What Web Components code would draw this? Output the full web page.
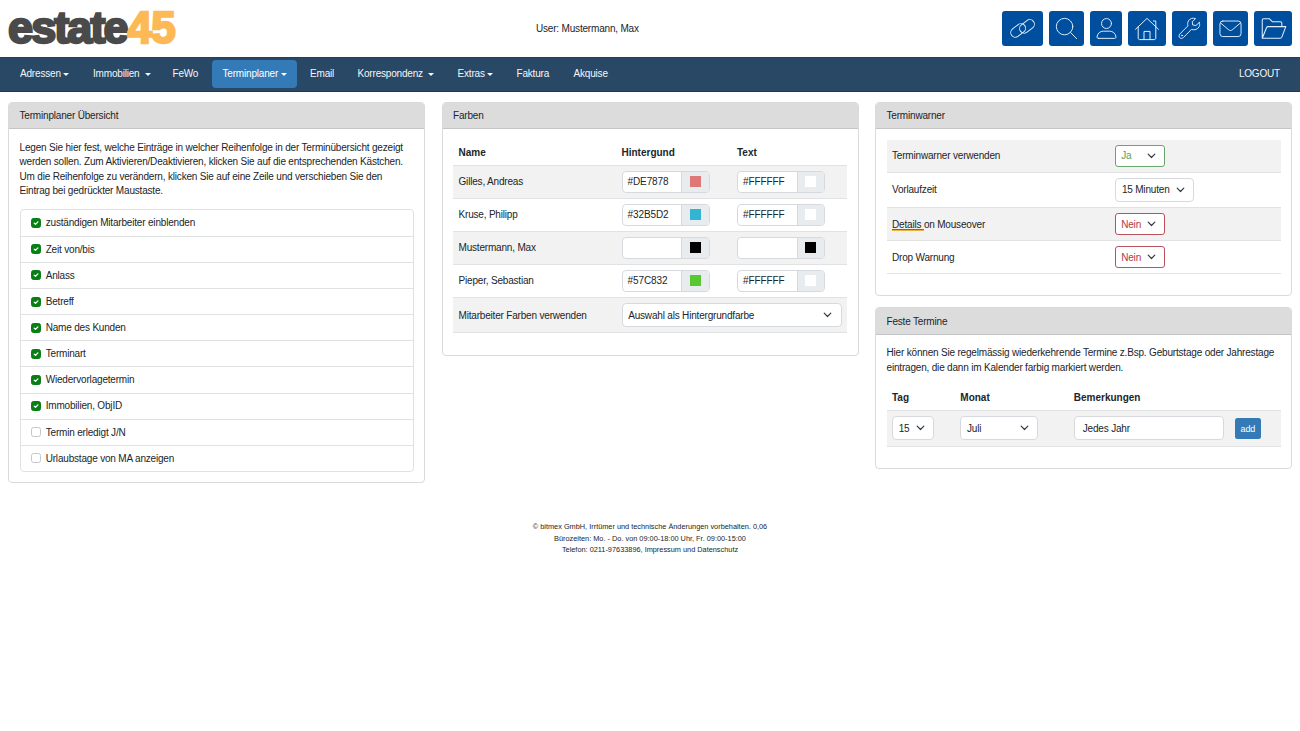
<!DOCTYPE html>
<html lang="de">
<head>
<meta charset="utf-8">
<title>estate45 - Terminplaner</title>
<style>
  body {
    margin: 0; background: #fff; color: #212529;
    font-family: 'Liberation Sans', Arial, sans-serif;
    font-size: 10px; line-height: 14.35px; letter-spacing: -.185px;
  }
</style>
</head>
<body>
<estate-app></estate-app>

<script>
(function () {
  const define = (name, css, render) => {
    customElements.define(name, class extends HTMLElement {
      connectedCallback() {
        const shadow = this.attachShadow({ mode: 'open' });
        shadow.innerHTML = `<style>:host { display: block; box-sizing: border-box; } * { box-sizing: border-box; } ${css}</style>${render(this)}`;
      }
    });
  };

  // Line icons for the quick links, 24x24 grid
  const ICONS = {
    link: '<rect x="-1" y="9.200" width="17" height="9.600" rx="4.800" transform="rotate(-38 7.500 14)"/><rect x="8.200" y="5" width="17" height="9.600" rx="4.800" transform="rotate(-38 16.700 9.800)"/>',
    search: '<circle cx="10" cy="10" r="8.600"/><path d="M16.200 16.200 22.600 22.600"/>',
    user: '<circle cx="12" cy="6.800" r="5.200"/><path d="M3.700 22.300h16.600c1.100 0 1.700-.6 1.600-1.500-.5-4-3.500-6-6.600-6H8.700c-3.100 0-6.100 2-6.600 6-.1.900.5 1.500 1.600 1.500z"/>',
    home: '<path d="M.5 12.300 12 1.400l11.500 10.900M3.200 10v11c0 1 .5 1.600 1.500 1.600h14.600c1 0 1.500-.6 1.500-1.600V10M9 22.400v-8h6v8M18.300 4h2.500v5.400"/>',
    wrench: '<path d="M22.200 5.800 18.700 8.900 15.300 8.300 14.900 5 18.300 1.700C15.400.6 12.300 1.500 10.800 4.200c-1 1.800-.8 3.500-.4 5L2 17.700c-1.200 1.200-1.200 2.900-.2 3.900s2.700 1 3.900-.2l8.300-8.400c3.300 1 6.500-.1 8-2.800.8-1.500.8-3 .2-4.400z"/><circle cx="4.200" cy="19.300" r=".5"/>',
    mail: '<rect x="1" y="4.200" width="22" height="16.200" rx="3"/><path d="m1.600 6.200 8.700 7.300c1 .8 2.400.8 3.400 0l8.700-7.300"/>',
    folder: '<path d="M1.200 21.300V4c0-.8.5-1.300 1.300-1.300h5.700l2.600 2.800h7.900c.8 0 1.300.5 1.300 1.300v3.400M1.200 21.300 5.400 11c.2-.5.600-.8 1.200-.8h17.200L20 20.300c-.3.700-.8 1-1.500 1z"/>'
  };

  define('estate-icon-button', `
    :host { height: 35px; border-radius: 3px; background: #004f9f; display: flex; align-items: center; justify-content: center; }
    svg { display: block; overflow: visible; fill: none; stroke: #e4eefa; stroke-width: 1; stroke-linejoin: round; stroke-linecap: round; }
  `, el => {
    const size = el.getAttribute('size') || 22;
    return `<svg width="${size}" height="${size}" viewBox="0 0 24 24">${ICONS[el.getAttribute('icon')]}</svg>`;
  });

  define('estate-logo', `
    :host { display: flex; align-items: baseline; line-height: 33px; font-weight: bold; -webkit-text-stroke: 2.400px currentColor; }
    .name { width: 119.500px; color: #4a4a4a; font-size: 45px; letter-spacing: -1.900px; }
    .num { color: #fdb955; font-size: 44px; letter-spacing: -.8px; }
  `, () => '<span class="name">estate</span><span class="num">45</span>');

  define('estate-header', `
    :host { height: 57px; padding: 11px 8px 0; display: grid; grid-template-columns: 528px 1fr auto; align-items: start; }
    .user { padding-top: 11px; }
    .links { display: flex; justify-content: flex-end; gap: 6px; }
  `, () => `
    <estate-logo></estate-logo>
    <div class="user"><slot></slot></div>
    <div class="links">
      <estate-icon-button icon="link" size="23" style="width:41px"></estate-icon-button>
      <estate-icon-button icon="search" size="23" style="width:35px"></estate-icon-button>
      <estate-icon-button icon="user" size="23" style="width:32px"></estate-icon-button>
      <estate-icon-button icon="home" size="24" style="width:38px"></estate-icon-button>
      <estate-icon-button icon="wrench" size="23" style="width:35px"></estate-icon-button>
      <estate-icon-button icon="mail" size="23" style="width:35px"></estate-icon-button>
      <estate-icon-button icon="folder" size="25" style="width:38px"></estate-icon-button>
    </div>`);

  define('estate-nav-item', `
    :host { height: 28px; padding: 0 11px; border-radius: 4px; display: flex; align-items: center; color: #f4f7f9; white-space: nowrap; }
    :host([active]) { background: #337ab7; color: #fff; }
    svg { flex: none; width: 6px; height: 3px; margin-left: 2.500px; fill: currentColor; }
    svg.wide { margin-left: 5px; }
  `, el => {
    const caret = el.getAttribute('caret');
    return `<slot></slot>${caret !== null ? `<svg class="${caret}" viewBox="0 0 6 3"><path d="M0 0h6L3 3z"/></svg>` : ''}`;
  });

  define('estate-nav', `
    :host { height: 34.500px; padding: 0 9px; background: #284865; border-top: 1px solid #21405e; border-bottom: 1px solid #1c3a57; display: flex; align-items: center; gap: 2px; }
    .end { margin-left: auto; }
  `, () => `
    <estate-nav-item caret style="width:71px">Adressen</estate-nav-item>
    <estate-nav-item caret="wide" style="width:77.500px">Immobilien</estate-nav-item>
    <estate-nav-item style="width:48px">FeWo</estate-nav-item>
    <estate-nav-item caret active style="width:85.500px">Terminplaner</estate-nav-item>
    <estate-nav-item style="width:45.500px">Email</estate-nav-item>
    <estate-nav-item caret="wide" style="width:98px">Korrespondenz</estate-nav-item>
    <estate-nav-item caret style="width:57px">Extras</estate-nav-item>
    <estate-nav-item style="width:55px">Faktura</estate-nav-item>
    <estate-nav-item>Akquise</estate-nav-item>
    <estate-nav-item class="end">LOGOUT</estate-nav-item>`);

  define('estate-card', `
    :host { border: 1px solid #d9dadb; border-radius: 4px; overflow: hidden; background: #fff; }
    header { height: 26.200px; padding: 1.500px 10.500px 0; display: flex; align-items: center; background: #dcdcdc; border-bottom: 1px solid #c3c4c5; }
    .body { padding: 10.500px 10.500px; }
    ::slotted(p) { margin: 0; padding: 1.200px 0 10.300px; }
  `, el => `<header>${el.getAttribute('heading')}</header><div class="body"><slot></slot></div>`);

  define('estate-check', `
    :host { height: 26.150px; padding: 0 10.500px; display: flex; align-items: center; gap: 4.700px; border-top: 1px solid #dfe1e3; }
    :host(:first-child) { border-top: 0; }
    .box { width: 10px; height: 10px; border: 1px solid #c4c8cc; border-radius: 2.500px; display: flex; }
    .label { padding-top: 1px; }
    :host([checked]) .box { background: #087f14; border-color: #087f14; }
    svg { width: 8px; height: 8px; fill: none; stroke: #fff; stroke-width: 1.300; display: none; stroke-linecap: round; stroke-linejoin: round; }
    :host([checked]) svg { display: block; }
  `, () => `<span class="box"><svg viewBox="0 0 8 8"><path d="M2.200 4.100 3.500 5.400 5.900 2.900"/></svg></span><span class="label"><slot></slot></span>`);

  define('estate-checklist', `
    :host { border: 1px solid #dfe1e3; border-radius: 4px; overflow: hidden; }
  `, () => '<slot></slot>');

  // Table row: columns come from the --cols property of the surrounding table
  define('estate-row', `
    :host { display: grid; grid-template-columns: var(--cols); align-items: center; padding-left: 5.500px; border-bottom: 1px solid #e0e2e4; white-space: nowrap; }
    :host([striped]) { background: #f2f2f2; }
    :host([head]) { font-weight: bold; letter-spacing: 0; }
    ::slotted(span) { padding-top: 1.500px; }
  `, () => '<slot></slot>');

  define('estate-select', `
    :host { height: 24px; padding: 0 8.500px 0 5.700px; border: 1px solid #d6dade; border-radius: 4px; background: #fff; display: flex; align-items: center; justify-content: space-between; }
    :host([tone]) { height: 22px; border-radius: 3px; padding-left: 5px; }
    :host([tone="yes"]) { border-color: #6aa570; }
    :host([tone="no"]) { border-color: #b8525d; }
    :host([tone="yes"]) span { color: #58a05d; }
    :host([tone="no"]) span { color: #b23a48; }
    span { padding-top: 1.500px; }
    svg { width: 9px; height: 6px; fill: none; stroke: #343a40; stroke-width: 1.200; stroke-linecap: round; stroke-linejoin: round; }
  `, () => '<span><slot></slot></span><svg viewBox="0 0 9 6"><path d="M1.200 1.200 4.500 4.500 7.800 1.200"/></svg>');

  define('estate-color', `
    :host { width: 88px; height: 22px; border: 1px solid #d6dade; border-radius: 4px; background: #fff; display: flex; overflow: hidden; letter-spacing: -.1px; }
    .value { flex: 1; padding: 1.500px 0 0 5px; display: flex; align-items: center; }
    .addon { width: 27.500px; background: #e9ecef; border-left: 1px solid #d6dade; display: flex; align-items: center; justify-content: center; }
    .addon i { width: 11px; height: 11px; background: var(--swatch); }
  `, el => {
    const value = el.getAttribute('value') || '';
    return `<span class="value">${value}</span><span class="addon" style="--swatch:${value || '#000'}"><i></i></span>`;
  });

  define('estate-text', `
    :host { height: 24px; padding: 1.500px 8px 0; border: 1px solid #d6dade; border-radius: 4px; background: #fff; display: flex; align-items: center; }
  `, () => '<slot></slot>');

  define('estate-button', `
    :host { width: 26px; height: 21px; padding-top: 1px; border-radius: 2.500px; background: #337ab7; color: #fff; font-size: 9px; display: flex; align-items: center; justify-content: center; }
  `, () => '<slot></slot>');

  const CHECKS = [
    ['zuständigen Mitarbeiter einblenden', true],
    ['Zeit von/bis', true],
    ['Anlass', true],
    ['Betreff', true],
    ['Name des Kunden', true],
    ['Terminart', true],
    ['Wiedervorlagetermin', true],
    ['Immobilien, ObjID', true],
    ['Termin erledigt J/N', false],
    ['Urlaubstage von MA anzeigen', false]
  ];

  const COLORS = [
    ['Gilles, Andreas', '#DE7878', '#FFFFFF'],
    ['Kruse, Philipp', '#32B5D2', '#FFFFFF'],
    ['Mustermann, Max', '', ''],
    ['Pieper, Sebastian', '#57C832', '#FFFFFF']
  ];

  define('estate-app', `
    main { padding: 10.500px 8px 0; display: grid; grid-template-columns: repeat(3, 1fr); gap: 16.500px; align-items: start; }
    .stack { display: grid; gap: 11px; }
    .colors { --cols: 163px 115.500px 1fr; padding-bottom: 11px; }
    .warner { --cols: 223.200px 1fr; padding-bottom: 11.200px; }
    .dates { --cols: 68.300px 113.500px 161px 1fr; padding-bottom: 11px; }
    .wide { grid-column: 2 / 4; width: 220px; }
    .mark { border-bottom: 1px solid #f0b140; text-decoration: underline; text-decoration-color: #6d6a62; text-underline-offset: 1px; }
    footer { margin-top: 38px; text-align: center; font-size: 7.350px; line-height: 11.200px; letter-spacing: 0; }
  `, () => `
    <estate-header>User: Mustermann, Max</estate-header>
    <estate-nav></estate-nav>
    <main>
      <estate-card heading="Terminplaner Übersicht">
        <p>Legen Sie hier fest, welche Einträge in welcher Reihenfolge in der Terminübersicht gezeigt<br>werden sollen. Zum Aktivieren/Deaktivieren, klicken Sie auf die entsprechenden Kästchen.<br>Um die Reihenfolge zu verändern, klicken Sie auf eine Zeile und verschieben Sie den<br>Eintrag bei gedrückter Maustaste.</p>
        <estate-checklist>
          ${CHECKS.map(([label, on]) => `<estate-check ${on ? 'checked' : ''}>${label}</estate-check>`).join('')}
        </estate-checklist>
      </estate-card>

      <estate-card heading="Farben">
        <div class="colors">
          <estate-row head style="height:26px"><span>Name</span><span>Hintergund</span><span>Text</span></estate-row>
          ${COLORS.map(([name, bg, fg], i) => `
            <estate-row ${i % 2 ? '' : 'striped'} style="height:33px">
              <span>${name}</span><estate-color value="${bg}"></estate-color><estate-color value="${fg}"></estate-color>
            </estate-row>`).join('')}
          <estate-row striped style="height:35.500px">
            <span>Mitarbeiter Farben verwenden</span><estate-select class="wide">Auswahl als Hintergrundfarbe</estate-select>
          </estate-row>
        </div>
      </estate-card>

      <div class="stack">
        <estate-card heading="Terminwarner">
          <div class="warner">
            <estate-row striped style="height:33px"><span>Terminwarner verwenden</span><estate-select tone="yes" style="width:50px">Ja</estate-select></estate-row>
            <estate-row style="height:35px"><span>Vorlaufzeit</span><estate-select style="width:79px">15 Minuten</estate-select></estate-row>
            <estate-row striped style="height:33.500px"><span><span class="mark">Details </span>on Mouseover</span><estate-select tone="no" style="width:50px">Nein</estate-select></estate-row>
            <estate-row style="height:32.500px"><span>Drop Warnung</span><estate-select tone="no" style="width:50px">Nein</estate-select></estate-row>
          </div>
        </estate-card>

        <estate-card heading="Feste Termine">
          <p>Hier können Sie regelmässig wiederkehrende Termine z.Bsp. Geburtstage oder Jahrestage<br>eintragen, die dann im Kalender farbig markiert werden.</p>
          <div class="dates">
            <estate-row head style="height:26px"><span>Tag</span><span>Monat</span><span>Bemerkungen</span></estate-row>
            <estate-row striped style="height:35.500px">
              <estate-select style="width:42px">15</estate-select>
              <estate-select style="width:78px">Juli</estate-select>
              <estate-text style="width:150px">Jedes Jahr</estate-text>
              <estate-button>add</estate-button>
            </estate-row>
          </div>
        </estate-card>
      </div>
    </main>
    <footer>© bitmex GmbH, Irrtümer und technische Änderungen vorbehalten. 0,06<br>Bürozeiten: Mo. - Do. von 09:00-18:00 Uhr, Fr. 09:00-15:00<br>Telefon: 0211-97633896, Impressum und Datenschutz</footer>`);
})();
</script>
</body>
</html>
